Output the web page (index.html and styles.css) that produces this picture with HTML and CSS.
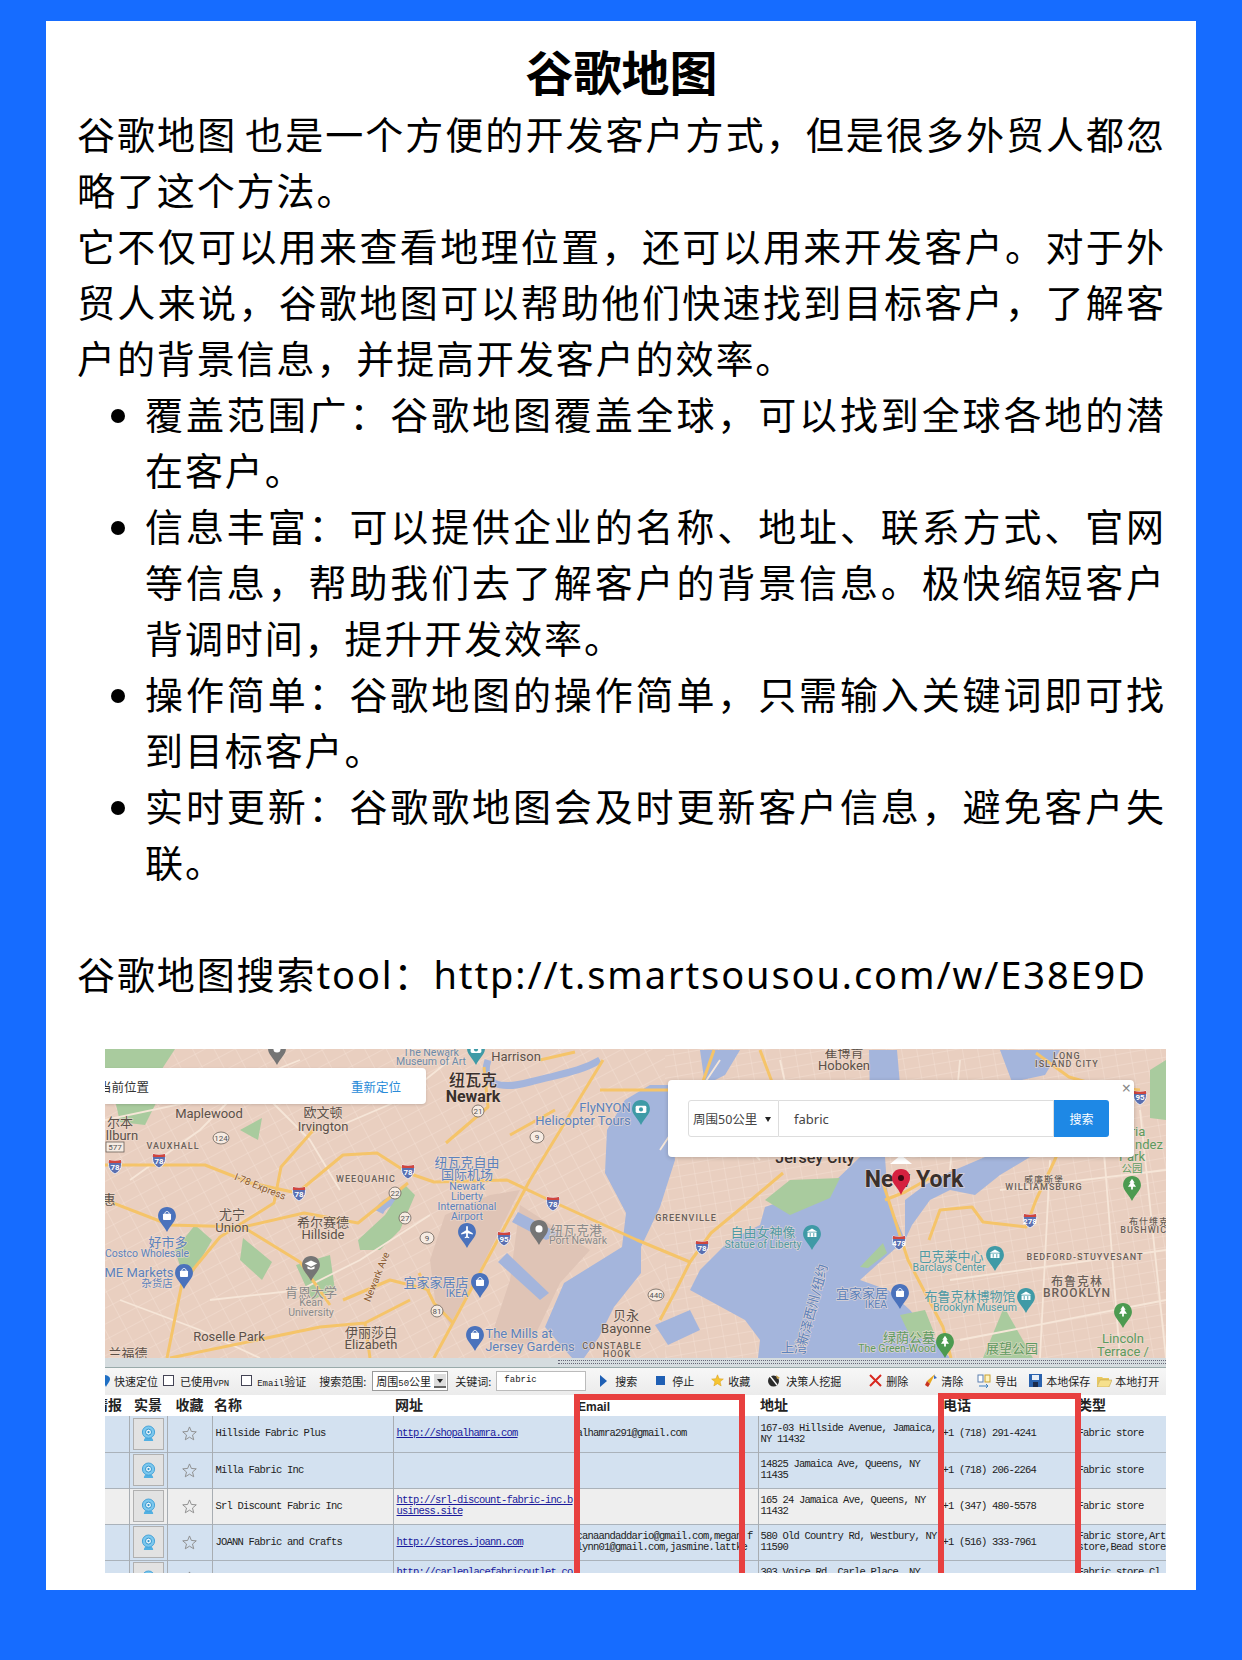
FILE: index.html
```html
<!DOCTYPE html>
<html lang="zh-CN">
<head>
    <meta charset="UTF-8">
    <meta name="viewport" content="width=device-width, initial-scale=1.0">
    <title>谷歌地图</title>
    <link rel="stylesheet" href="styles.css">
</head>
<body>
<svg class="defs" width="0" height="0">
    <defs>
        <pattern id="streets" width="19" height="14" patternUnits="userSpaceOnUse" patternTransform="rotate(-28)">
            <path d="M0 0H19M0 0V14" fill="none" stroke="#f3e0d3" stroke-width="1"/>
        </pattern>
        <pattern id="streets2" width="15" height="11" patternUnits="userSpaceOnUse" patternTransform="rotate(-10)">
            <path d="M0 0H15M0 0V11" fill="none" stroke="#f3e0d3" stroke-width="1"/>
        </pattern>
        <symbol id="pin-shop" viewBox="0 0 20 28">
            <path d="M10 0C4 0 0 4.500 0 10c0 6 6 10 10 18 4-8 10-12 10-18C20 4.500 16 0 10 0z" fill="currentColor"/>
            <rect x="5.500" y="7.500" width="9" height="7" rx="1" fill="#fff"/>
            <path d="M7.500 8c0-4 5-4 5 0" fill="none" stroke="#fff"/>
        </symbol>
        <symbol id="pin-tree" viewBox="0 0 20 28">
            <path d="M10 0C4 0 0 4.500 0 10c0 6 6 10 10 18 4-8 10-12 10-18C20 4.500 16 0 10 0z" fill="currentColor"/>
            <path d="M10 3l3 4.500h-1.500l3 4.500H11v3H9v-3H5.500l3-4.500H7z" fill="#fff"/>
        </symbol>
        <symbol id="pin-dot" viewBox="0 0 20 28">
            <path d="M10 0C4 0 0 4.500 0 10c0 6 6 10 10 18 4-8 10-12 10-18C20 4.500 16 0 10 0z" fill="currentColor"/>
            <circle cx="10" cy="10" r="4" fill="#fff"/>
        </symbol>
        <symbol id="pin-grad" viewBox="0 0 20 28">
            <path d="M10 0C4 0 0 4.500 0 10c0 6 6 10 10 18 4-8 10-12 10-18C20 4.500 16 0 10 0z" fill="currentColor"/>
            <path d="M10 5l7 3.500-7 3.500-7-3.500zM6 11.500v2.500c2 1.500 6 1.500 8 0v-2.500l-4 2z" fill="#fff"/>
        </symbol>
        <symbol id="pin-plane" viewBox="0 0 20 28">
            <path d="M10 0C4 0 0 4.500 0 10c0 6 6 10 10 18 4-8 10-12 10-18C20 4.500 16 0 10 0z" fill="currentColor"/>
            <path d="M9 3.500h2v4.500l5.500 3.500v1.500L11 11.500V15l1.500 1v1L10 16.500 7.500 17v-1L9 15v-3.500L3.500 13v-1.500L9 8z" fill="#fff"/>
        </symbol>
        <symbol id="pin-museum" viewBox="0 0 20 28">
            <path d="M10 0C4 0 0 4.500 0 10c0 6 6 10 10 18 4-8 10-12 10-18C20 4.500 16 0 10 0z" fill="currentColor"/>
            <path d="M10 4l6 3.500H4zM5 8.500h10v5H5z" fill="#fff"/>
            <path d="M8 9v4M12 9v4" stroke="currentColor"/>
        </symbol>
        <symbol id="pin-cam" viewBox="0 0 20 28">
            <path d="M10 0C4 0 0 4.500 0 10c0 6 6 10 10 18 4-8 10-12 10-18C20 4.500 16 0 10 0z" fill="currentColor"/>
            <rect x="4" y="6.500" width="12" height="8" rx="1.500" fill="#fff"/>
            <circle cx="10" cy="10.500" r="2.300" fill="currentColor"/>
        </symbol>
        <symbol id="ishield" viewBox="0 0 14 15">
            <path d="M1 1c4 1 8 1 12 0 1 5 1 10-6 14C0 11 0 6 1 1z" fill="#5a6fb0" stroke="#fff" stroke-width=".8"/>
            <path d="M1 1c4 1 8 1 12 0l.3 3H.7z" fill="#d0453e"/>
        </symbol>
        <symbol id="cam" viewBox="0 0 16 18">
            <path d="M3 17c0-3 2-4 5-4s5 1 5 4z" fill="#52b0e2"/>
            <circle cx="8" cy="7.500" r="6.500" fill="#7cc8ee" stroke="#3f9fd6"/>
            <circle cx="8" cy="7.500" r="3.200" fill="#e8f6fd" stroke="#2d8fc8"/>
            <circle cx="8" cy="7.500" r="1.200" fill="#2d8fc8"/>
        </symbol>
        <symbol id="star" viewBox="0 0 16 16">
            <path d="M8 1l2 4.800 5.200.4-4 3.400 1.300 5.100L8 11.900l-4.500 2.800 1.300-5.100-4-3.400L6 5.800z" fill="none" stroke="#8c8c8c"/>
        </symbol>
    </defs>
</svg>

<main class="card">
    <h1 class="title">谷歌地图</h1>
    <p>谷歌地图 也是一个方便的开发客户方式，但是很多外贸人都忽略了这个方法。</p>
    <p>它不仅可以用来查看地理位置，还可以用来开发客户。对于外贸人来说，谷歌地图可以帮助他们快速找到目标客户，了解客户的背景信息，并提高开发客户的效率。</p>
    <ul class="points">
        <li>覆盖范围广：谷歌地图覆盖全球，可以找到全球各地的潜在客户。</li>
        <li>信息丰富：可以提供企业的名称、地址、联系方式、官网等信息，帮助我们去了解客户的背景信息。极快缩短客户背调时间，提升开发效率。</li>
        <li>操作简单：谷歌地图的操作简单，只需输入关键词即可找到目标客户。</li>
        <li>实时更新：谷歌歌地图会及时更新客户信息，避免客户失联。</li>
    </ul>
    <p class="link-line">谷歌地图搜索tool：http://t.smartsousou.com/w/E38E9D</p>

    <div class="shot">
        <div class="map">
            <svg class="map-svg" viewBox="105 1049 1061 309" width="1061" height="309">
                <rect x="105" y="1049" width="1061" height="309" fill="#e9cfc0"/>
                <rect x="105" y="1049" width="560" height="309" fill="url(#streets)"/>
                <rect x="665" y="1049" width="501" height="309" fill="url(#streets2)"/>

                <!-- airport and port land -->
                <path class="port" d="M430 1260L445 1215 490 1195 520 1190 480 1270 450 1325 435 1300z"/>
                <path class="port" d="M520 1205L590 1250 560 1283 540 1325 530 1345 490 1340 510 1280z"/>

                <!-- water -->
                <path class="water" d="M607 1130L625 1100 650 1085 668 1085 675 1160 660 1207 641 1247 641 1273 614 1307 599 1337 584 1358 572 1358 545 1327 564 1283 622 1247 626 1213 605 1173z"/>
                <path class="water" d="M860 1157L885 1157 888 1200 905 1240 880 1262 860 1280 888 1290 910 1310 935 1340 950 1358 758 1358 760 1340 745 1320 690 1290 700 1270 730 1240 760 1225 765 1207 833 1183z"/>
                <path class="water" d="M905 1200L925 1185 950 1172 985 1157 1030 1157 1000 1175 975 1195 950 1190 930 1200 912 1225 905 1240z"/>
                <path class="water" d="M869 1050H897L900 1085 890 1100 870 1100z"/>
                <path class="water" d="M1000 1050L1060 1050 1045 1075 1012 1082z"/>
                <path class="water" d="M655 1325L690 1310 700 1330 668 1345z"/>
                <path class="water" d="M700 1050H740L725 1075 705 1085z"/>
                <path class="water" d="M518 1212L560 1234 546 1240 512 1222z"/>
                <path class="water" d="M507 1253L549 1293 540 1300 498 1262z"/>
                <path class="river" d="M488 1060C480 1085 500 1090 530 1082S580 1072 600 1060"/>
                <path class="river thin" d="M379 1212Q385 1200 395 1202"/>

                <!-- parks -->
                <path class="park" d="M105 1049H175L160 1072 125 1095 105 1090z"/>
                <path class="park" d="M358 1240L385 1215 405 1185 415 1195 400 1230 380 1250 360 1250z"/>
                <path class="park" d="M186 1285L212 1240 195 1225 175 1250z"/>
                <path class="park" d="M243 1238L272 1262 262 1280 240 1260z"/>
                <path class="park" d="M296 1265L330 1255 335 1290 312 1300z"/>
                <path class="park" d="M115 1100L160 1095 145 1125 120 1122z"/>
                <path class="park" d="M765 1200L790 1180 840 1178 830 1198 790 1215z"/>
                <path class="park" d="M860 1267L883 1243 887 1253 868 1268z"/>
                <path class="park" d="M983 1358L1004 1307 1033 1358z"/>
                <path class="park" d="M1150 1070L1166 1060V1120L1150 1118z"/>
                <path class="park" d="M900 1315L925 1310 935 1335 912 1340z"/>
                <path class="park" d="M240 1130L262 1118 258 1140z"/>

                <!-- smaller streets that break up the grid -->
                <path class="minor" d="M105 1120L200 1100 300 1060M130 1180L200 1130 240 1090M210 1300L300 1290 360 1260 430 1215M120 1300L200 1330 260 1358M330 1130L400 1100 450 1060M340 1190L310 1140 270 1100"/>
                <path class="minor" d="M700 1100L760 1160M780 1060L800 1150M720 1060L660 1150M960 1060L950 1170M1000 1190L1166 1170M950 1280L1166 1250M1050 1160L1040 1358M1100 1100L1120 1358M960 1340L1166 1300M1140 1110L1166 1358"/>

                <!-- highways -->
                <path class="road" d="M105 1165L205 1165 251 1183 297 1193 343 1155 377 1153 408 1173 434 1182 507 1180 549 1200 637 1240 690 1262 711 1233 751 1200 783 1173"/>
                <path class="road" d="M434 1358L530 1180 603 1060"/>
                <path class="road" d="M167 1358L182 1283 220 1237 274 1203 281 1167 316 1127"/>
                <path class="road" d="M243 1227L304 1213 358 1223 408 1183"/>
                <path class="road" d="M170 1358L320 1327 365 1323 410 1300"/>
                <path class="road" d="M419 1273L434 1303 453 1323"/>
                <path class="road" d="M446 1143L488 1107 484 1067"/>
                <path class="road" d="M883 1183L908 1260 943 1327 951 1358"/>
                <path class="road" d="M929 1240L940 1210 972 1207 983 1222 1026 1227 1036 1200 1058 1153"/>
                <path class="road" d="M1036 1053L1069 1077 1104 1087 1140 1090"/>
                <path class="road" d="M885 1200L905 1192 930 1178"/>
                <path class="road" d="M690 1262L676 1290 660 1320"/>
                <path class="road" d="M600 1090H668"/>
                <path class="road" d="M105 1200L170 1225 243 1227 300 1262 330 1305"/>
                <path class="road" d="M510 1135L555 1110"/>
                <path class="road" d="M714 1050L700 1090M760 1050L775 1090"/>
                <path class="road" d="M343 1300L390 1280 430 1290M365 1323L370 1358M540 1060L575 1052"/>

                <!-- map labels -->
                <text class="lb poi" x="431" y="1056">The Newark</text>
                <text class="lb poi" x="431" y="1065">Museum of Art</text>
                <text class="lb city" x="516" y="1061">Harrison</text>
                <text class="lb big" x="473" y="1086">纽瓦克</text>
                <text class="lb big strong" x="473" y="1102">Newark</text>
                <text class="lb city" x="209" y="1118">Maplewood</text>
                <text class="lb city" x="323" y="1117">欧文顿</text>
                <text class="lb city" x="323" y="1131">Irvington</text>
                <text class="lb city" x="120" y="1127">尔本</text>
                <text class="lb city" x="122" y="1140">llburn</text>
                <text class="lb area" x="173" y="1149">VAUXHALL</text>
                <text class="lb air" x="467" y="1167">纽瓦克自由</text>
                <text class="lb air" x="467" y="1179">国际机场</text>
                <text class="lb air sm" x="467" y="1190">Newark</text>
                <text class="lb air sm" x="467" y="1200">Liberty</text>
                <text class="lb air sm" x="467" y="1210">International</text>
                <text class="lb air sm" x="467" y="1220">Airport</text>
                <text class="lb grey" x="576" y="1235">纽瓦克港</text>
                <text class="lb grey sm" x="578" y="1244">Port Newark</text>
                <text class="lb road-t" x="260" y="1190" transform="rotate(22 260 1187)">I-78 Express</text>
                <text class="lb area" x="366" y="1182">WEEQUAHIC</text>
                <text class="lb city" x="232" y="1219">尤宁</text>
                <text class="lb city" x="232" y="1232">Union</text>
                <text class="lb city" x="323" y="1227">希尔赛德</text>
                <text class="lb city" x="323" y="1239">Hillside</text>
                <text class="lb air" x="168" y="1247">好市多</text>
                <text class="lb air sm" x="147" y="1257">Costco Wholesale</text>
                <text class="lb air" x="139" y="1277">ME Markets</text>
                <text class="lb air sm" x="157" y="1287">杂货店</text>
                <text class="lb grey" x="311" y="1297">肯恩大学</text>
                <text class="lb grey sm" x="311" y="1306">Kean</text>
                <text class="lb grey sm" x="311" y="1316">University</text>
                <text class="lb air" x="436" y="1287">宜家家居店</text>
                <text class="lb air sm" x="457" y="1297">IKEA</text>
                <text class="lb road-t" x="377" y="1280" transform="rotate(-68 377 1277)">Newark Ave</text>
                <text class="lb city" x="229" y="1341">Roselle Park</text>
                <text class="lb city" x="371" y="1337">伊丽莎白</text>
                <text class="lb city" x="371" y="1349">Elizabeth</text>
                <text class="lb air" x="519" y="1338">The Mills at</text>
                <text class="lb air" x="530" y="1351">Jersey Gardens</text>
                <text class="lb city" x="626" y="1320">贝永</text>
                <text class="lb city" x="626" y="1333">Bayonne</text>
                <text class="lb area" x="612" y="1349">CONSTABLE</text>
                <text class="lb area" x="617" y="1357">HOOK</text>
                <text class="lb city" x="128" y="1358">兰福德</text>
                <text class="lb city" x="109" y="1204">惠</text>
                <text class="lb area" x="686" y="1221">GREENVILLE</text>
                <text class="lb air" x="605" y="1112">FlyNYON</text>
                <text class="lb air" x="583" y="1125">Helicopter Tours</text>
                <text class="lb city" x="844" y="1057">崔博肯</text>
                <text class="lb city" x="844" y="1070">Hoboken</text>
                <text class="lb area" x="1067" y="1059">LONG</text>
                <text class="lb area" x="1067" y="1067">ISLAND CITY</text>
                <text class="lb big" x="815" y="1163">Jersey City</text>
                <text class="lb big strong ny" x="914" y="1187">New York</text>
                <text class="lb area" x="1044" y="1183">威廉斯堡</text>
                <text class="lb area" x="1044" y="1190">WILLIAMSBURG</text>
                <text class="lb park-t" x="1138" y="1136">ria</text>
                <text class="lb park-t" x="1149" y="1149">ndez</text>
                <text class="lb park-t" x="1132" y="1161">Park</text>
                <text class="lb park-t sm" x="1132" y="1172">公园</text>
                <text class="lb area" x="1149" y="1225">布什维克</text>
                <text class="lb area" x="1147" y="1233">BUSHWICK</text>
                <text class="lb teal" x="763" y="1237">自由女神像</text>
                <text class="lb teal sm" x="763" y="1248">Statue of Liberty</text>
                <text class="lb teal" x="951" y="1261">巴克莱中心</text>
                <text class="lb teal sm" x="949" y="1271">Barclays Center</text>
                <text class="lb area" x="1085" y="1260">BEDFORD-STUYVESANT</text>
                <text class="lb area big-a" x="1077" y="1286">布鲁克林</text>
                <text class="lb area big-a" x="1077" y="1297">BROOKLYN</text>
                <text class="lb air" x="862" y="1298">宜家家居</text>
                <text class="lb air sm" x="876" y="1308">IKEA</text>
                <text class="lb teal" x="970" y="1301">布鲁克林博物馆</text>
                <text class="lb teal sm" x="975" y="1311">Brooklyn Museum</text>
                <text class="lb park-t" x="1123" y="1343">Lincoln</text>
                <text class="lb park-t" x="1123" y="1356">Terrace /</text>
                <text class="lb park-t" x="909" y="1342">绿荫公墓</text>
                <text class="lb park-t sm" x="897" y="1352">The Green-Wood</text>
                <text class="lb park-t" x="1012" y="1353">展望公园</text>
                <text class="lb air" x="794" y="1352">上湾</text>
                <text class="lb air" x="813" y="1309" transform="rotate(-75 813 1305)">新泽西州/纽约</text>

                <!-- shields -->
                <use href="#ishield" x="108" y="1159" width="14" height="15"/>
                <use href="#ishield" x="152" y="1153" width="14" height="15"/>
                <use href="#ishield" x="401" y="1164" width="14" height="15"/>
                <use href="#ishield" x="292" y="1186" width="14" height="15"/>
                <use href="#ishield" x="546" y="1196" width="14" height="15"/>
                <use href="#ishield" x="497" y="1231" width="14" height="15"/>
                <use href="#ishield" x="1022" y="1213" width="16" height="15"/>
                <use href="#ishield" x="891" y="1235" width="16" height="15"/>
                <use href="#ishield" x="695" y="1240" width="14" height="15"/>
                <use href="#ishield" x="1133" y="1090" width="14" height="15"/>
                <text class="lb sh" x="115" y="1170">78</text>
                <text class="lb sh" x="159" y="1164">78</text>
                <text class="lb sh" x="408" y="1175">78</text>
                <text class="lb sh" x="299" y="1197">78</text>
                <text class="lb sh" x="553" y="1207">78</text>
                <text class="lb sh" x="504" y="1242">95</text>
                <text class="lb sh" x="1030" y="1224">278</text>
                <text class="lb sh" x="899" y="1246">478</text>
                <text class="lb sh" x="702" y="1251">78</text>
                <text class="lb sh" x="1140" y="1100">95</text>
                <g class="route">
                    <ellipse cx="221" cy="1138" rx="8" ry="6"/><text class="lb rt" x="221" y="1141">124</text>
                    <ellipse cx="478" cy="1111" rx="6" ry="6"/><text class="lb rt" x="478" y="1114">21</text>
                    <ellipse cx="395" cy="1193" rx="6" ry="6"/><text class="lb rt" x="395" y="1196">22</text>
                    <ellipse cx="405" cy="1218" rx="6" ry="6"/><text class="lb rt" x="405" y="1221">27</text>
                    <ellipse cx="427" cy="1238" rx="7" ry="6"/><text class="lb rt" x="427" y="1241">9</text>
                    <ellipse cx="537" cy="1137" rx="7" ry="6"/><text class="lb rt" x="537" y="1140">9</text>
                    <ellipse cx="437" cy="1311" rx="6" ry="6"/><text class="lb rt" x="437" y="1314">81</text>
                    <ellipse cx="656" cy="1295" rx="8" ry="6"/><text class="lb rt" x="656" y="1298">440</text>
                    <rect x="106" y="1142" width="18" height="10"/><text class="lb rt" x="115" y="1150">577</text>
                </g>

                <!-- place pins -->
                <use class="p-blue" href="#pin-shop" x="158" y="1207" width="18" height="25"/>
                <use class="p-blue" href="#pin-shop" x="175" y="1264" width="18" height="25"/>
                <use class="p-blue" href="#pin-plane" x="458" y="1223" width="18" height="25"/>
                <use class="p-blue" href="#pin-shop" x="471" y="1273" width="18" height="25"/>
                <use class="p-blue" href="#pin-shop" x="466" y="1326" width="18" height="25"/>
                <use class="p-blue" href="#pin-shop" x="891" y="1284" width="18" height="25"/>
                <use class="p-grey" href="#pin-grad" x="302" y="1256" width="18" height="25"/>
                <use class="p-grey" href="#pin-dot" x="530" y="1220" width="18" height="25"/>
                <use class="p-grey" href="#pin-dot" x="268" y="1040" width="18" height="25"/>
                <use class="p-teal" href="#pin-cam" x="632" y="1100" width="18" height="25"/>
                <use class="p-teal" href="#pin-museum" x="803" y="1225" width="18" height="25"/>
                <use class="p-teal" href="#pin-museum" x="986" y="1246" width="18" height="25"/>
                <use class="p-teal" href="#pin-museum" x="1017" y="1288" width="18" height="25"/>
                <use class="p-teal" href="#pin-cam" x="467" y="1040" width="18" height="25"/>
                <use class="p-green" href="#pin-tree" x="1123" y="1176" width="18" height="25"/>
                <use class="p-green" href="#pin-tree" x="1114" y="1303" width="18" height="25"/>
                <use class="p-green" href="#pin-tree" x="936" y="1333" width="18" height="25"/>

                <!-- red marker in the centre of the search -->
                <path d="M890 1158l11 -9 11 9z" fill="#fff" transform="translate(0 6)"/>
                <path d="M901 1169c-6 0-9 4-9 9 0 6 6 9 9 17 3-8 9-11 9-17 0-5-3-9-9-9z" fill="#d5213f"/>
                <circle cx="901" cy="1178" r="3" fill="#3a0710"/>
            </svg>

            <div class="locate">
                <span class="locate-now">当前位置</span>
                <span class="locate-btn">重新定位</span>
            </div>

            <div class="search-box">
                <span class="close">×</span>
                <div class="search-group">
                    <div class="search-range"><span>周围50公里</span><i class="range-caret"></i></div>
                    <div class="search-input">fabric</div>
                    <div class="search-btn">搜索</div>
                </div>
            </div>
        </div>

        <div class="splitter"><div class="grip"></div></div>

        <div class="toolbar">
            <svg class="ti" width="6" height="12" viewBox="0 0 6 12"><path d="M0 0c4 0 6 2 6 4 0 3-3 5-4 8L0 8z" fill="#1f6fc4"/></svg>
            <span class="g5">快速定位</span>
            <i class="check g5"></i>
            <span class="g6">已使用<b class="mono">VPN</b></span>
            <i class="check g12"></i>
            <span class="g5"><b class="mono">Email</b>验证</span>
            <span class="g13">搜索范围:</span>
            <div class="tb-select g6"><span>周围<b class="mono">50</b>公里</span><i class="tb-arrow"></i></div>
            <span class="g7">关键词:</span>
            <div class="tb-input g5 mono">fabric</div>
            <svg class="g14" width="7" height="12" viewBox="0 0 7 12"><path d="M0 0l7 6-7 6z" fill="#1f5fb4"/></svg>
            <span class="g8">搜索</span>
            <svg class="g19" width="9" height="9" viewBox="0 0 9 9"><rect width="9" height="9" fill="#1f5fb4"/></svg>
            <span class="g7">停止</span>
            <svg class="g17" width="13" height="13" viewBox="0 0 16 16"><path d="M8 1l2 4.800 5.200.4-4 3.400 1.300 5.100L8 11.900l-4.500 2.800 1.300-5.100-4-3.400L6 5.800z" fill="#f6c531" stroke="#d79a12" stroke-width=".6"/></svg>
            <span class="g4">收藏</span>
            <svg class="g17" width="14" height="14" viewBox="0 0 14 14"><circle cx="6.500" cy="7" r="5.500" fill="#2c2c2c"/><path d="M3 2l7 9" stroke="#fff" stroke-width="1.300"/><path d="M9 1l4 3-3 1z" fill="#c9a24a"/></svg>
            <span class="g5">决策人挖掘</span>
            <svg class="g28" width="13" height="13" viewBox="0 0 13 13"><path d="M1 1l11 11M12 1L1 12" stroke="#d8281f" stroke-width="2"/></svg>
            <span class="g4">删除</span>
            <svg class="g17" width="12" height="13" viewBox="0 0 12 13"><path d="M10 0L2 7l3 3z" fill="#e8a820"/><path d="M2 7l-2 4 3 2 2-3z" fill="#c8331f"/><path d="M9 1l3 3-3 1z" fill="#3a6ac0"/></svg>
            <span class="g4">清除</span>
            <svg class="g14" width="15" height="14" viewBox="0 0 15 14"><rect x="1" y="1" width="5" height="7" fill="#fff" stroke="#5a7fb0"/><rect x="8" y="1" width="5" height="7" fill="#fff4c0" stroke="#c8a030"/><path d="M2 12h9m-2-2l2 2-2 2" fill="none" stroke="#3a7fc0"/></svg>
            <span class="g3">导出</span>
            <svg class="g12" width="13" height="13" viewBox="0 0 13 13"><rect width="13" height="13" fill="#2a62ae"/><rect x="3" y="1" width="7" height="5" fill="#e8eef6"/><rect x="4" y="8" width="5" height="5" fill="#1a2a4a"/></svg>
            <span class="g4">本地保存</span>
            <svg class="g7" width="15" height="13" viewBox="0 0 15 13"><path d="M0 3h5l1 1h6v2H3L0 12z" fill="#e8c860"/><path d="M3 6h12l-3 7H0z" fill="#f6e08c" stroke="#b8983a" stroke-width=".5"/></svg>
            <span class="g3">本地打开</span>
        </div>

        <table class="results">
            <colgroup>
                <col class="c-report"><col class="c-view"><col class="c-fav"><col class="c-name"><col class="c-url">
                <col class="c-mail"><col class="c-addr"><col class="c-tel"><col class="c-type">
            </colgroup>
            <thead>
                <tr>
                    <th class="clip-left">情报</th><th class="center">实景</th><th class="center">收藏</th><th>名称</th><th>网址</th>
                    <th class="mail-head">Email</th><th>地址</th><th class="tel-head">电话</th><th>类型</th>
                </tr>
            </thead>
            <tbody>
                <tr>
                    <td></td>
                    <td class="center"><span class="view-btn"><svg width="15" height="17"><use href="#cam"/></svg></span></td>
                    <td class="center"><svg width="15" height="15"><use href="#star"/></svg></td>
                    <td>Hillside Fabric Plus</td>
                    <td><a href="#">http://shopalhamra.com</a></td>
                    <td class="mail">alhamra291@gmail.com</td>
                    <td class="addr">167-03 Hillside Avenue, Jamaica,<br>NY 11432</td>
                    <td class="tel">+1 (718) 291-4241</td>
                    <td class="type">Fabric store</td>
                </tr>
                <tr>
                    <td></td>
                    <td class="center"><span class="view-btn"><svg width="15" height="17"><use href="#cam"/></svg></span></td>
                    <td class="center"><svg width="15" height="15"><use href="#star"/></svg></td>
                    <td>Milla Fabric Inc</td>
                    <td></td>
                    <td class="mail"></td>
                    <td class="addr">14825 Jamaica Ave, Queens, NY<br>11435</td>
                    <td class="tel">+1 (718) 206-2264</td>
                    <td class="type">Fabric store</td>
                </tr>
                <tr class="alt">
                    <td></td>
                    <td class="center"><span class="view-btn"><svg width="15" height="17"><use href="#cam"/></svg></span></td>
                    <td class="center"><svg width="15" height="15"><use href="#star"/></svg></td>
                    <td>Srl Discount Fabric Inc</td>
                    <td><a href="#">http://srl-discount-fabric-inc.b<br>usiness.site</a></td>
                    <td class="mail"></td>
                    <td class="addr">165 24 Jamaica Ave, Queens, NY<br>11432</td>
                    <td class="tel">+1 (347) 480-5578</td>
                    <td class="type">Fabric store</td>
                </tr>
                <tr>
                    <td></td>
                    <td class="center"><span class="view-btn"><svg width="15" height="17"><use href="#cam"/></svg></span></td>
                    <td class="center"><svg width="15" height="15"><use href="#star"/></svg></td>
                    <td>JOANN Fabric and Crafts</td>
                    <td><a href="#">http://stores.joann.com</a></td>
                    <td class="mail">canaandaddario@gmail.com,megan f<br>lynn01@gmail.com,jasmine.lattke</td>
                    <td class="addr">580 Old Country Rd, Westbury, NY<br>11590</td>
                    <td class="tel">+1 (516) 333-7961</td>
                    <td class="type">Fabric store,Art<br>store,Bead store</td>
                </tr>
                <tr>
                    <td></td>
                    <td class="center"><span class="view-btn"><svg width="15" height="17"><use href="#cam"/></svg></span></td>
                    <td class="center"><svg width="15" height="15"><use href="#star"/></svg></td>
                    <td></td>
                    <td><a href="#">http://carleplacefabricoutlet.co<br>m</a></td>
                    <td class="mail"></td>
                    <td class="addr">303 Voice Rd, Carle Place, NY<br>11514</td>
                    <td class="tel"></td>
                    <td class="type">Fabric store,Cl<br>othing store</td>
                </tr>
            </tbody>
        </table>

        <div class="mark mark-mail"></div>
        <div class="mark mark-tel"></div>
    </div>
</main>
</body>
</html>
```

FILE: styles.css
```css
* {
    box-sizing: border-box;
}
html, body {
    margin: 0;
    height: 1660px;
    overflow: hidden;
}
body {
    background: #166cff;
    padding: 21px 46px 0;
    color: #000;
    font-family: "Noto Sans", "Noto Sans CJK SC", sans-serif;
}
.defs {
    position: absolute;
}
.card {
    background: #fff;
    height: 1569px;
    padding: 19px 30px 0 31px;
    font-size: 38px;
    line-height: 56px;
    letter-spacing: 1.900px;
    word-spacing: -4px;
}
.title {
    margin: 0;
    font-size: 48px;
    line-height: 66px;
    letter-spacing: 0;
    text-align: center;
    font-weight: 700;
}
p {
    margin: 0;
    text-align: justify;
}
.points {
    margin: 0 0 56px;
    padding-left: 68px;
    text-align: justify;
}
.link-line {
    text-align: left;
}
.shot {
    position: relative;
    width: 1061px;
    height: 524px;
    margin: 47px 0 0 28px;
    overflow: hidden;
    letter-spacing: 0;
    word-spacing: 0;
    line-height: normal;
    background: #fff;
}

/* map */
.map {
    position: relative;
    height: 309px;
    overflow: hidden;
}
.map-svg {
    display: block;
}
.water { fill: #a4b5dc; }
.river { fill: none; stroke: #a4b5dc; stroke-width: 7; }
.river.thin { stroke-width: 9; }
.park { fill: #a9cb9e; }
.port { fill: #dfc4b6; }
.road { fill: none; stroke: #f5c469; stroke-width: 3; stroke-linejoin: round; }
.minor { fill: none; stroke: #f6e6d8; stroke-width: 1.800; }
.lb {
    font-family: Roboto, "Noto Sans CJK SC", sans-serif;
    font-size: 13px;
    text-anchor: middle;
    paint-order: stroke;
    stroke: rgba(240, 222, 210, .7);
    stroke-width: 1.500px;
}
.lb.sm { font-size: 10.500px; }
.poi { fill: #6d8aa8; font-size: 10.500px; }
.city { fill: #5c5048; }
.big { fill: #3a302c; font-size: 16px; font-weight: 500; }
.strong { font-weight: 700; }
.ny { font-size: 23px; }
.area { fill: #6a5f58; font-size: 9px; letter-spacing: 1px; font-weight: 500; }
.big-a { font-size: 12px; }
.air { fill: #5c82bc; }
.grey { fill: #8a8a8a; }
.teal { fill: #4f9aa4; }
.park-t { fill: #5d9a5f; }
.road-t { fill: #8a5a30; font-size: 10px; }
.sh { font-size: 8px; fill: #fff; stroke: none; font-weight: 700; }
.rt { font-size: 8px; fill: #555; stroke: none; }
.route ellipse, .route rect { fill: #f6ebe2; stroke: #6a5f58; stroke-width: .8; }
.p-blue { color: #4a72bc; }
.p-grey { color: #757575; }
.p-teal { color: #3f9aa6; }
.p-green { color: #4c9a50; }

.locate {
    position: absolute;
    left: 0;
    top: 19px;
    width: 321px;
    height: 36px;
    padding: 0 25px 0 0;
    display: flex;
    justify-content: space-between;
    align-items: center;
    background: #fff;
    border-radius: 0 4px 4px 0;
    font-family: "Noto Sans CJK SC", sans-serif;
    font-size: 12.500px;
    box-shadow: 0 1px 3px rgba(0, 0, 0, .15);
}
.locate-now {
    margin-left: -6px;
    color: #333;
}
.locate-btn {
    color: #2a8bd8;
}
.search-box {
    position: absolute;
    left: 563px;
    top: 31px;
    width: 466px;
    height: 77px;
    padding: 20px 25px 0 20px;
    background: #fff;
    border-radius: 4px;
    box-shadow: 0 1px 4px rgba(0, 0, 0, .2);
}
.close {
    position: absolute;
    right: 3px;
    top: 0;
    color: #888;
    font-size: 16px;
    line-height: 16px;
}
.search-group {
    display: flex;
    height: 37px;
    font-family: "Noto Sans", "Noto Sans CJK SC", sans-serif;
    font-size: 13px;
    color: #444;
}
.search-range {
    width: 91px;
    display: flex;
    align-items: center;
    padding-left: 4px;
    gap: 8px;
    border: 1px solid #ddd;
    border-radius: 3px 0 0 3px;
    font-size: 12.500px;
    white-space: nowrap;
}
.range-caret {
    border: 3px solid transparent;
    border-top: 5px solid #222;
    margin-top: 4px;
}
.search-input {
    flex: 1;
    display: flex;
    align-items: center;
    padding-left: 15px;
    border: 1px solid #ddd;
    border-left: 0;
}
.search-btn {
    width: 55px;
    display: flex;
    align-items: center;
    justify-content: center;
    background: #1e88e5;
    color: #fff;
    border-radius: 0 3px 3px 0;
    font-size: 12px;
}

/* desktop tool under the map */
.splitter {
    height: 10px;
    background: #d5dcdf;
    padding: 2px 0 0 453px;
    border-bottom: 1px solid #9aa;
}
.grip {
    height: 4px;
    border-top: 1px dotted #667;
    border-bottom: 1px dotted #667;
}
.toolbar {
    height: 27px;
    display: flex;
    align-items: center;
    padding-bottom: 2px;
    background: linear-gradient(#f7f7f7, #ebebeb);
    font-family: "Noto Sans CJK SC", sans-serif;
    font-size: 11px;
    color: #222;
    white-space: nowrap;
}
.mono {
    font-family: "Liberation Mono", monospace;
    font-size: 9px;
    font-weight: 400;
}
.g3 { margin-left: 3px; }
.g4 { margin-left: 4px; }
.g5 { margin-left: 5px; }
.g6 { margin-left: 6px; }
.g7 { margin-left: 7px; }
.g8 { margin-left: 8px; }
.g12 { margin-left: 12px; }
.g13 { margin-left: 13px; }
.g14 { margin-left: 14px; }
.g17 { margin-left: 17px; }
.g19 { margin-left: 19px; }
.g28 { margin-left: 28px; }
.ti {
    margin-left: -1px;
    margin-right: 4px;
}
.toolbar .ti + .g5 {
    margin-left: 0;
}
.check {
    width: 11px;
    height: 11px;
    background: #fff;
    border: 1px solid #445;
}
.tb-select {
    width: 76px;
    height: 20px;
    display: flex;
    align-items: center;
    justify-content: space-between;
    padding: 0 1px 0 3px;
    background: #fff;
    border: 1px solid #999;
}
.tb-arrow {
    width: 12px;
    height: 14px;
    background: #ddd;
    border-bottom: 2px solid #666;
    position: relative;
}
.tb-arrow::after {
    content: "";
    position: absolute;
    left: 3px;
    top: 5px;
    border: 3px solid transparent;
    border-top: 4px solid #222;
}
.tb-input {
    width: 90px;
    height: 20px;
    padding-left: 7px;
    line-height: 17px;
    background: #fff;
    border: 1px solid #bbb;
}

/* results */
.results {
    width: 1061px;
    table-layout: fixed;
    border-collapse: collapse;
    font-family: "Liberation Mono", monospace;
    font-size: 10.500px;
    letter-spacing: -.8px;
    line-height: 11px;
    color: #222;
    white-space: nowrap;
}
.c-report { width: 24px; }
.c-view { width: 38px; }
.c-fav { width: 45px; }
.c-name { width: 181px; }
.c-url { width: 181px; }
.c-mail { width: 184px; }
.c-addr { width: 180px; }
.c-tel { width: 138px; }
.c-type { width: 90px; }
.results thead tr {
    height: 21px;
    background: #fff;
}
.results th {
    padding: 0 2px 3px;
    text-align: left;
    font-family: "Noto Sans CJK SC", sans-serif;
    font-size: 14px;
    letter-spacing: 0;
    font-weight: 700;
    line-height: 18px;
    overflow: hidden;
}
.results th.clip-left {
    padding-right: 7px;
    direction: rtl;
}
.results th.center {
    text-align: center;
    padding-left: 0;
    padding-right: 0;
}
.results th.mail-head {
    font-family: "Liberation Sans", sans-serif;
    font-size: 12px;
    padding: 2px 0 0 4px;
}
.results th.tel-head {
    padding-left: 5px;
}
.results tbody tr {
    height: 36px;
    background: #d3e1f0;
    border-bottom: 1px solid #aab2ba;
}
.results tbody tr.alt {
    background: #eeeeee;
}
.results td {
    padding: 0 3px;
    vertical-align: middle;
    overflow: hidden;
    border-left: 1px solid #a8adb2;
}
.results td:first-child {
    border-left: 0;
}
.results td.center {
    padding: 0;
    text-align: center;
}
.results td svg {
    display: block;
    margin: 0 auto;
}
.results td.mail { padding-left: 2px; }
.results td.addr { padding-left: 2px; }
.results td.tel { padding-left: 4px; }
.results td.type { padding-left: 1px; }
.results a {
    color: #1a1a9c;
}
.view-btn {
    display: flex;
    align-items: center;
    justify-content: center;
    width: 31px;
    height: 32px;
    margin: 0 auto;
    background: #e2e2e2;
    border: 1px solid #b0b0b0;
}

/* red boxes drawn over the screenshot */
.mark {
    position: absolute;
    border: 6px solid #e8403f;
    border-bottom: 0;
}
.mark-mail {
    left: 469px;
    top: 345px;
    width: 171px;
    height: 179px;
}
.mark-tel {
    left: 833px;
    top: 344px;
    width: 143px;
    height: 180px;
}
```
